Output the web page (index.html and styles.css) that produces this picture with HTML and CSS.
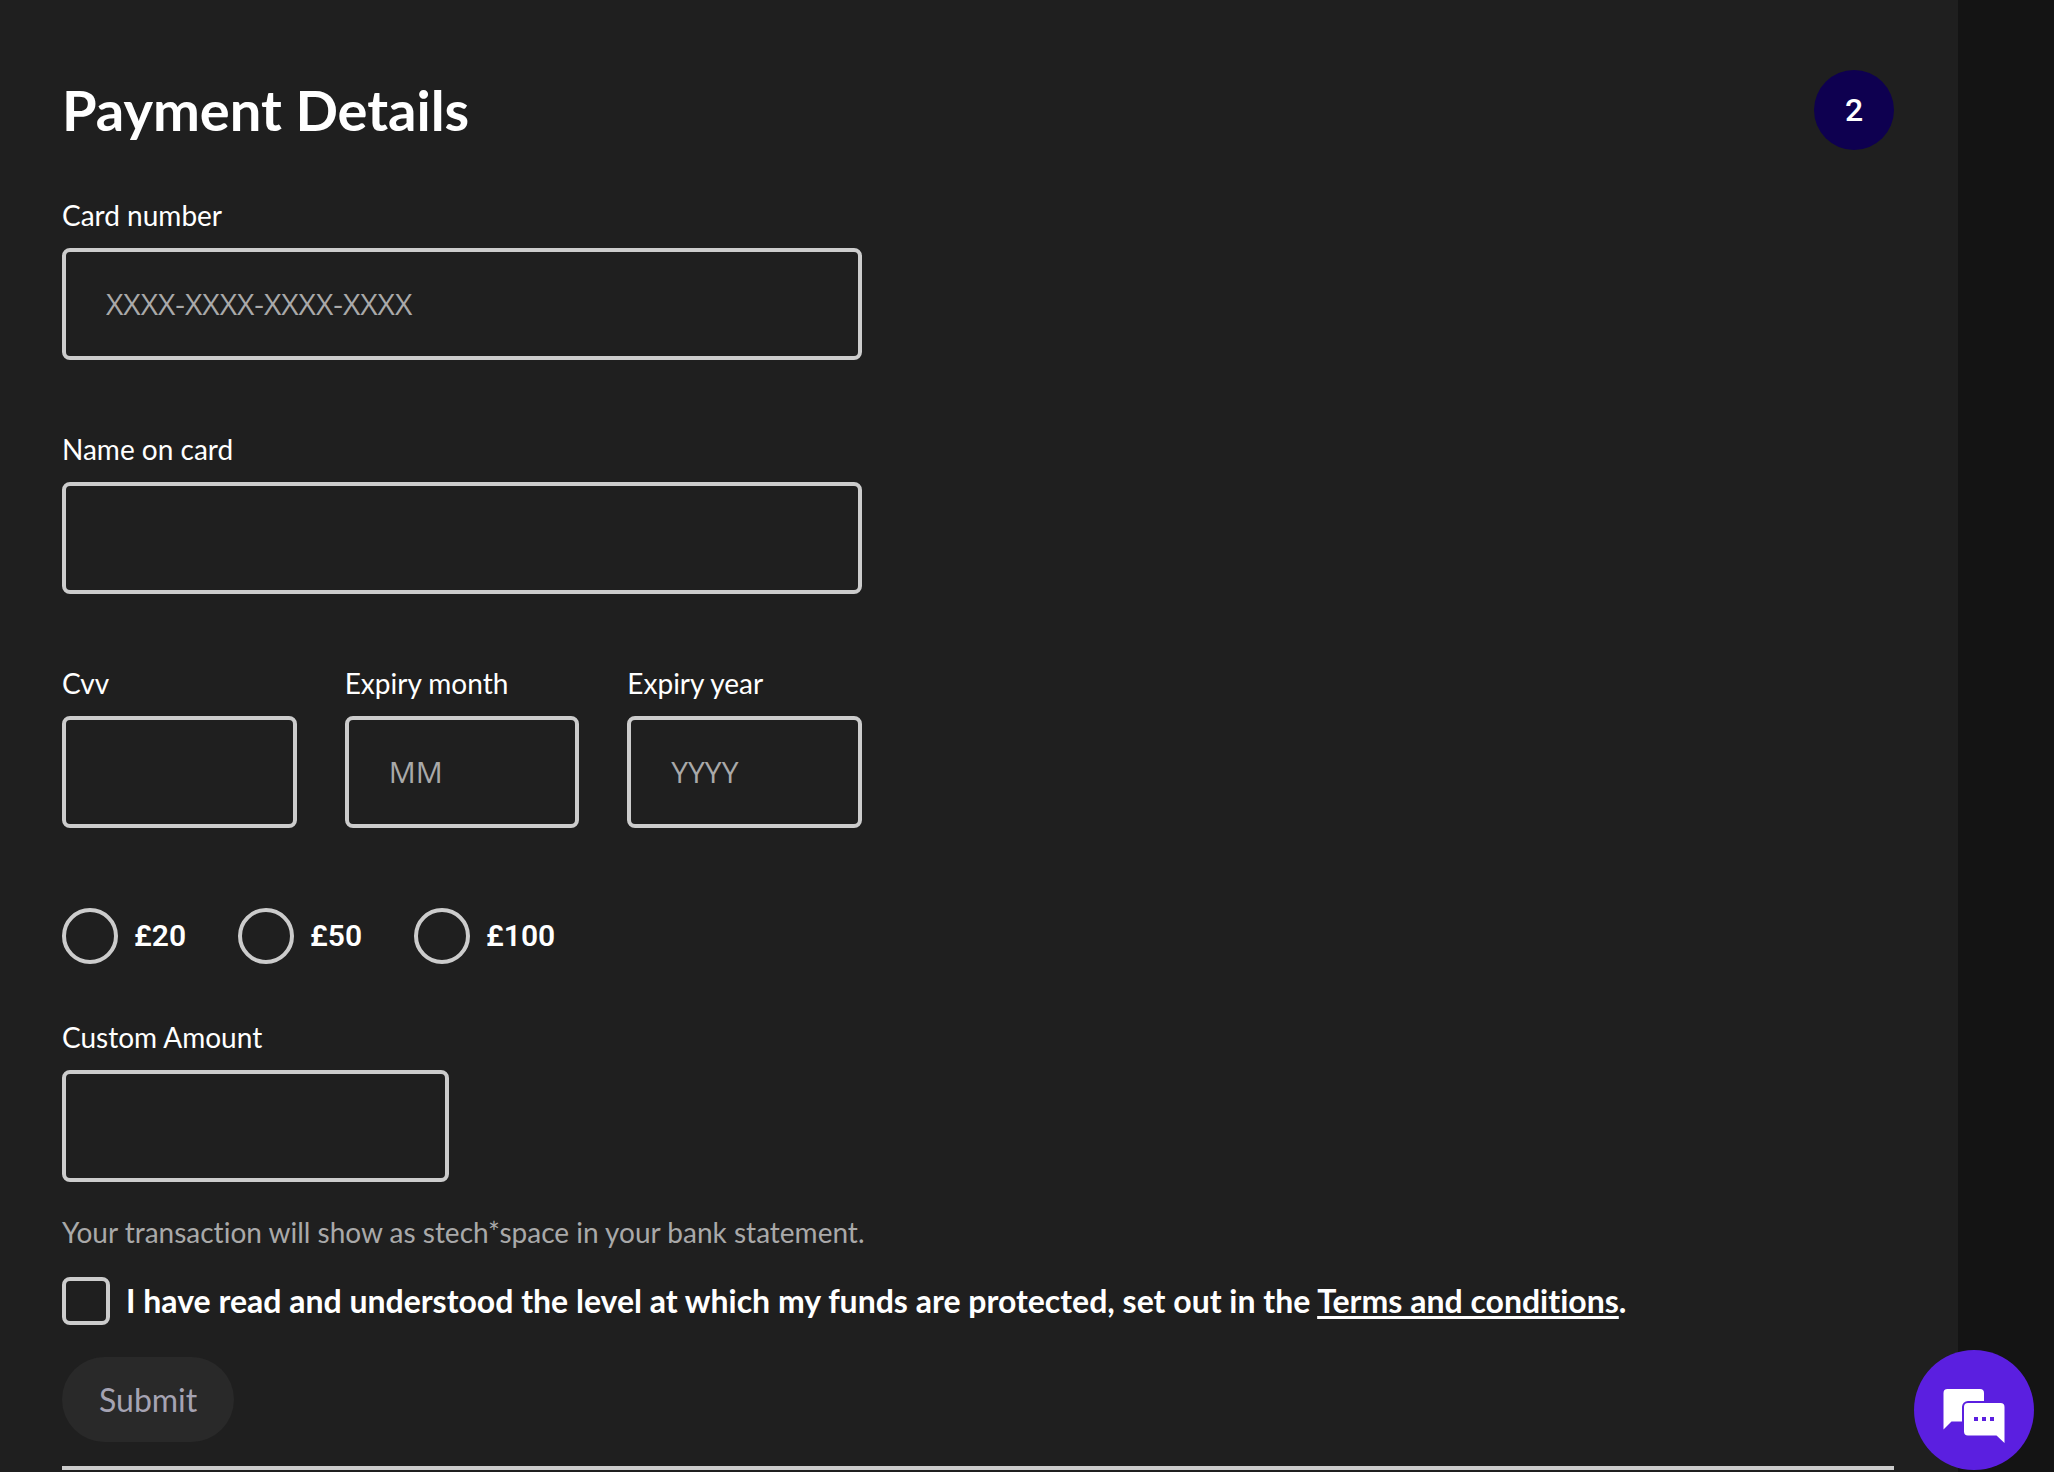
FILE: index.html
```
<!DOCTYPE html>
<html lang="en">

<head>
  <meta charset="UTF-8">
  <meta name="viewport" content="width=device-width, initial-scale=1.0">
  <title>Payment Details</title>
  <link rel="stylesheet" href="styles.css">
</head>

<body>

  <main class="panel">
    <header class="panel-header">
      <h1>Payment Details</h1>
      <span class="step">2</span>
    </header>

    <form id="paymentForm">
      <div class="fields">
        <div class="field">
          <label for="cardNumber">Card number</label>
          <input type="text" id="cardNumber" placeholder="XXXX-XXXX-XXXX-XXXX">
        </div>

        <div class="field">
          <label for="cardName">Name on card</label>
          <input type="text" id="cardName">
        </div>

        <div class="field-row">
          <div class="field">
            <label for="cvv">Cvv</label>
            <input type="text" id="cvv">
          </div>
          <div class="field">
            <label for="expiryMonth">Expiry month</label>
            <input type="text" id="expiryMonth" placeholder="MM">
          </div>
          <div class="field">
            <label for="expiryYear">Expiry year</label>
            <input type="text" id="expiryYear" placeholder="YYYY">
          </div>
        </div>
      </div>

      <div class="amounts">
        <label class="amount"><input type="radio" name="amount" value="20">£20</label>
        <label class="amount"><input type="radio" name="amount" value="50">£50</label>
        <label class="amount"><input type="radio" name="amount" value="100">£100</label>
      </div>

      <div class="field custom-amount">
        <label for="customAmount">Custom Amount</label>
        <input type="text" id="customAmount">
      </div>

      <p class="note">Your transaction will show as stech*space in your bank statement.</p>

      <div class="terms">
        <input type="checkbox" id="terms">
        <label for="terms">I have read and understood the level at which my funds are protected, set out in the <a href="#">Terms and conditions</a>.</label>
      </div>

      <button type="submit" class="submit" disabled>Submit</button>
    </form>
    <hr>
  </main>

  <button type="button" class="chat" aria-label="Open chat">
    <svg viewBox="0 0 120 120" width="120" height="120">
      <path fill="#fff" d="M33.500 39h32.500a4 4 0 0 1 4 4v8H54a6 6 0 0 0-6 6v14.500H37.500l-8 8V43a4 4 0 0 1 4-4z"/>
      <path fill="#fff" d="M54 53h32.500a4 4 0 0 1 4 4v36l-8-7.500H54a4 4 0 0 1-4-4V57a4 4 0 0 1 4-4z"/>
      <path fill="#5b1fe0" d="M60 67h4v4h-4zM68 67h4v4h-4zM76 67h4v4h-4z"/>
    </svg>
  </button>

</body>

</html>
```
FILE: styles.css
```
* {
  box-sizing: border-box;
}

body {
  margin: 0;
  background: #141414;
  color: #fff;
  font-family: Lato, sans-serif;
  font-size: 28px;
  line-height: 38px;
  font-variant-ligatures: none;
}

.panel {
  min-height: 100vh;
  margin-right: 96px;
  padding: 70px 64px 0 62px;
  background: #1f1f1f;
}

.panel-header {
  display: flex;
  align-items: center;
  justify-content: space-between;
  margin-bottom: 46px;
}

h1 {
  margin: 0;
  font-size: 56px;
  line-height: 64px;
  font-weight: 700;
}

.step {
  display: flex;
  align-items: center;
  justify-content: center;
  width: 80px;
  height: 80px;
  border-radius: 50%;
  background: #0e0050;
  font-family: Roboto, sans-serif;
  font-size: 32px;
  font-weight: 500;
}

.fields {
  display: flex;
  flex-direction: column;
  gap: 70px;
  max-width: 800px;
}

.field {
  display: flex;
  flex-direction: column;
  gap: 14px;
  min-width: 0;
}

.field-row {
  display: grid;
  grid-template-columns: repeat(3, 1fr);
  gap: 48px;
}

.field input {
  width: 100%;
  height: 112px;
  padding: 0 40px 2px;
  border: 4px solid #ccc;
  border-radius: 8px;
  background: transparent;
  color: #fff;
  font-family: "Open Sans", sans-serif;
  font-size: 30px;
}

.field input::placeholder {
  color: #a9a9a9;
  opacity: 1;
}

.amounts {
  display: flex;
  gap: 52px;
  margin: 80px 0 54px;
}

.amount {
  display: flex;
  align-items: center;
  gap: 16px;
  font-family: Roboto, sans-serif;
  font-size: 30px;
  font-weight: 600;
}

.amount input,
.terms input {
  appearance: none;
  flex-shrink: 0;
  margin: 0;
  border: 4px solid #ccc;
}

.amount input {
  width: 56px;
  height: 56px;
  border-radius: 50%;
}

.custom-amount {
  max-width: 387px;
}

.note {
  margin: 31px 0 26px;
  color: #a9a9a9;
}

.terms {
  display: flex;
  align-items: center;
  gap: 16px;
  margin-bottom: 32px;
  font-size: 32px;
  font-weight: 700;
}

.terms input {
  width: 48px;
  height: 48px;
  border-radius: 8px;
}

.terms a {
  color: #fff;
  text-decoration-thickness: 3px;
  text-underline-offset: 3px;
  text-decoration-skip-ink: none;
}

.submit {
  display: block;
  height: 85px;
  padding: 0 37px;
  border: 0;
  border-radius: 43px;
  background: #292929;
  color: #a5a3b3;
  font-family: inherit;
  font-size: 32px;
}

hr {
  height: 4px;
  margin: 24px 0 0;
  border: 0;
  background: #ccc;
}

.chat {
  position: fixed;
  right: 20px;
  bottom: 2px;
  width: 120px;
  height: 120px;
  padding: 0;
  border: 0;
  border-radius: 50%;
  background: #5b1fe0;
}

.chat svg {
  display: block;
}
```
